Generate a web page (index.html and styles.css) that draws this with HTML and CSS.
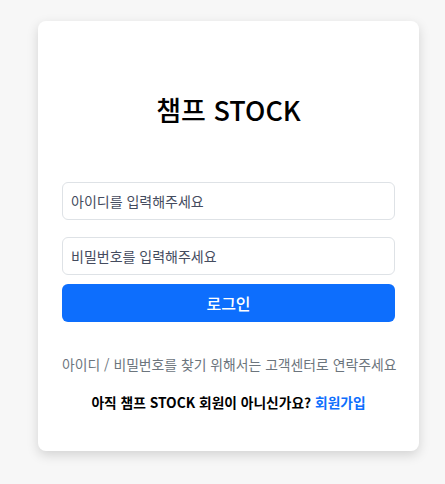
FILE: index.html
```html
<!DOCTYPE html>
<html lang="ko">
<head>
<meta charset="utf-8">
<link rel="stylesheet" href="styles.css">
</head>
<body>
<main class="card">
  <h1 class="title">챔프 STOCK</h1>
  <form class="form">
    <input class="field field-id" type="text" placeholder="아이디를 입력해주세요">
    <input class="field field-pw" type="password" placeholder="비밀번호를 입력해주세요">
    <button class="btn" type="button">로그인</button>
  </form>
  <p class="help">아이디 / 비밀번호를 찾기 위해서는 고객센터로 연락주세요</p>
  <p class="signup">아직 챔프 STOCK 회원이 아니신가요? <a class="link" href="#">회원가입</a></p>
</main>
</body>
</html>
```
FILE: styles.css
```css
* { box-sizing: border-box; }
html, body { margin: 0; padding: 0; }
body {
  background: #f7f7f7;
  font-family: "Noto Sans CJK KR", "Noto Sans", sans-serif;
  color: #212529;
  padding: 21px 26px 33px 38px;
}
.card {
  width: 381px;
  height: 430px;
  background: #fff;
  border-radius: 8px;
  box-shadow: 0 4px 12px rgba(0,0,0,0.15);
  padding: 72px 24px 0 24px;
}
.title {
  margin: 0;
  font-size: 27px;
  line-height: 34px;
  font-weight: 500;
  text-align: center;
  color: #000;
}
.form {
  margin-top: 55px;
  display: flex;
  flex-direction: column;
}
.field {
  height: 38px;
  border: 1px solid #dee2e6;
  border-radius: 6px;
  padding: 6px 8px;
  font-family: inherit;
  font-size: 14px;
  color: #212529;
}
.field::placeholder { color: #444b5e; }
.field-pw { margin-top: 17px; }
.btn {
  margin-top: 9px;
  height: 38px;
  border: none;
  border-radius: 6px;
  background: #0d6efd;
  color: #fff;
  font-family: inherit;
  font-size: 16px;
  font-weight: 500;
}
.help {
  margin: 32px 0 0;
  font-size: 13.85px;
  line-height: 21px;
  text-align: center;
  white-space: nowrap;
  color: #6c757d;
}
.signup {
  margin: 17px 0 0;
  font-size: 13.75px;
  line-height: 21px;
  text-align: center;
  font-weight: 700;
  color: #000;
}
.link { color: #0d6efd; text-decoration: none; }
```
